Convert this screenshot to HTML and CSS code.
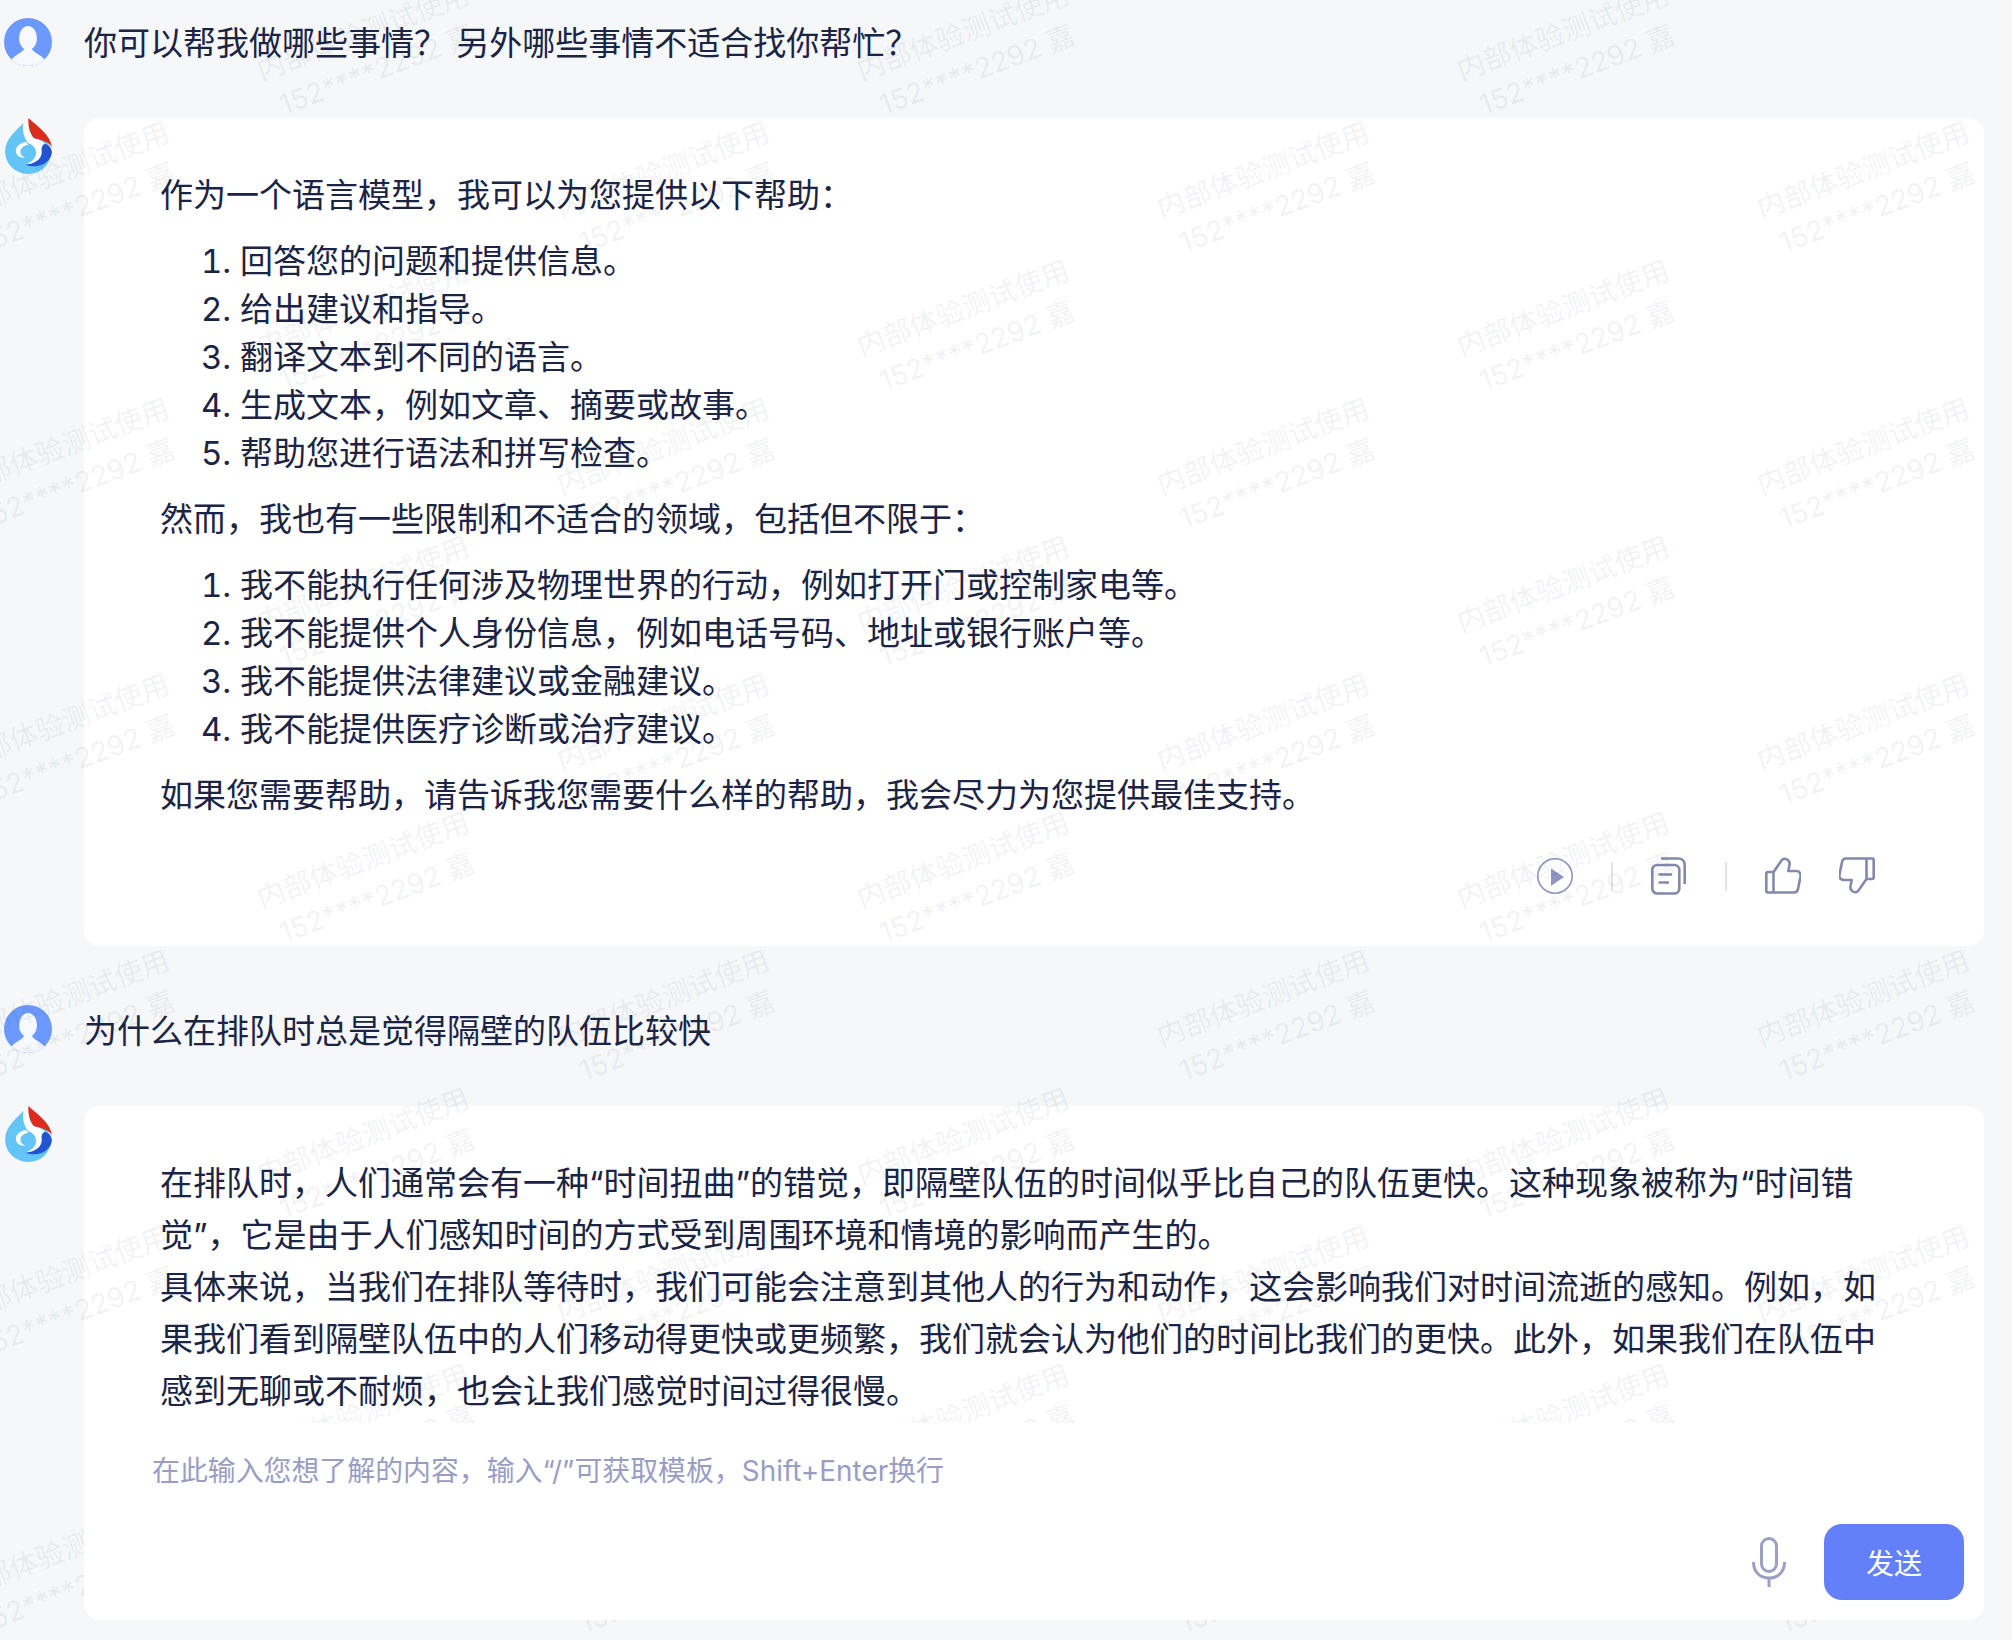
FILE: index.html
```html
<!DOCTYPE html>
<html lang="zh-CN">
<head>
    <meta charset="UTF-8">
    <meta name="viewport" content="width=device-width, initial-scale=1.0">
    <title>对话</title>
    <link rel="stylesheet" href="styles.css">
</head>
<body>
    <div id="page">
        <div id="chat">
            <div class="msg-user first">
                <svg class="avatar" viewBox="0 0 48 48">
                    <defs><clipPath id="a1"><circle cx="24" cy="24" r="24"/></clipPath></defs>
                    <circle cx="24" cy="24" r="24" fill="#6c99fd"/>
                    <g clip-path="url(#a1)" fill="#f6f9ff">
                        <ellipse cx="24" cy="20" rx="9" ry="12"/>
                        <path d="M7 42 C12 36 18 35 20 31 H28 C30 35 36 36 41 42 C36 47 30 48 24 48 C18 48 12 47 7 42Z"/>
                    </g>
                </svg>
                <div class="user-text">你可以帮我做哪些事情？ 另外哪些事情不适合找你帮忙？</div>
            </div>

            <div class="msg-bot">
                <svg class="logo" viewBox="0 0 140 168">
                    <path d="M55 15 C28 42 0 65 0 100 C0 140 32 168 70 168 C105 168 135 145 140 100 C130 60 90 55 55 15Z" fill="#62c5f6"/>
                    <path d="M55 15 L70 5 C68 25 72 45 86 60 C100 64 112 68 120 78 C112 80 108 88 110 100 C112 125 85 140 60 140 C85 132 95 115 92 100 C90 85 78 78 68 75 C58 60 50 40 55 15Z" fill="#fff"/>
                    <path d="M62 72 C42 75 28 90 33 105 C36 115 48 122 60 118 C50 115 44 106 46 98 C48 88 58 82 70 80Z" fill="#fff"/>
                    <path d="M120 78 C132 82 140 92 140 105 C135 135 100 155 60 140 C85 140 112 125 110 100 C108 88 112 80 120 78Z" fill="#2154d3"/>
                    <path d="M70 0 C100 28 136 50 140 88 C128 68 105 66 86 60 C72 42 68 20 70 0Z" fill="#dc2c1e"/>
                </svg>
                <div class="card">
                    <p>作为一个语言模型，我可以为您提供以下帮助：</p>
                    <ol>
                        <li>回答您的问题和提供信息。</li>
                        <li>给出建议和指导。</li>
                        <li>翻译文本到不同的语言。</li>
                        <li>生成文本，例如文章、摘要或故事。</li>
                        <li>帮助您进行语法和拼写检查。</li>
                    </ol>
                    <p>然而，我也有一些限制和不适合的领域，包括但不限于：</p>
                    <ol>
                        <li>我不能执行任何涉及物理世界的行动，例如打开门或控制家电等。</li>
                        <li>我不能提供个人身份信息，例如电话号码、地址或银行账户等。</li>
                        <li>我不能提供法律建议或金融建议。</li>
                        <li>我不能提供医疗诊断或治疗建议。</li>
                    </ol>
                    <p>如果您需要帮助，请告诉我您需要什么样的帮助，我会尽力为您提供最佳支持。</p>
                    <div class="actions">
                        <svg class="act" viewBox="0 0 36 40">
                            <circle cx="18" cy="20" r="17.2" fill="none" stroke="#8f94c2" stroke-width="1.6"/>
                            <path d="M14 12.5 L27 21 L14 30Z" fill="#8f94c2"/>
                        </svg>
                        <span class="sep"></span>
                        <svg class="act" viewBox="0 0 36 40" fill="none" stroke="#8489ab" stroke-width="2.6">
                            <rect x="1.3" y="9" width="27" height="28.5" rx="5"/>
                            <path d="M10 2.5 H27 C31 2.5 33.7 5 33.7 9 V28"/>
                            <path d="M7.5 18.5 H21 M7.5 26.5 H18"/>
                        </svg>
                        <span class="sep"></span>
                        <svg class="act" viewBox="0 0 36 40" fill="none" stroke="#8489ab" stroke-width="2.6" stroke-linejoin="round">
                            <path d="M8.5 16 L15.5 6 C17 3 19.5 2 22 3.5 C24.5 5 25 7 24.5 9 L23.3 15 H31 C34.5 15 36 17.5 35.5 20.5 L33 33 C32.5 35.5 31.5 36.5 29 36.5 H2.5 C1.5 36.5 1.3 36 1.3 35 V18 C1.3 16.5 2 16 3 16 H8.5 V36.5"/>
                        </svg>
                        <svg class="act" viewBox="0 0 36 40" fill="none" stroke="#8489ab" stroke-width="2.6" stroke-linejoin="round">
                            <path transform="rotate(180 18 19.5)" d="M8.5 16 L15.5 6 C17 3 19.5 2 22 3.5 C24.5 5 25 7 24.5 9 L23.3 15 H31 C34.5 15 36 17.5 35.5 20.5 L33 33 C32.5 35.5 31.5 36.5 29 36.5 H2.5 C1.5 36.5 1.3 36 1.3 35 V18 C1.3 16.5 2 16 3 16 H8.5 V36.5"/>
                        </svg>
                    </div>
                </div>
            </div>

            <div class="msg-user">
                <svg class="avatar" viewBox="0 0 48 48">
                    <defs><clipPath id="a2"><circle cx="24" cy="24" r="24"/></clipPath></defs>
                    <circle cx="24" cy="24" r="24" fill="#6c99fd"/>
                    <g clip-path="url(#a2)" fill="#f6f9ff">
                        <ellipse cx="24" cy="20" rx="9" ry="12"/>
                        <path d="M7 42 C12 36 18 35 20 31 H28 C30 35 36 36 41 42 C36 47 30 48 24 48 C18 48 12 47 7 42Z"/>
                    </g>
                </svg>
                <div class="user-text">为什么在排队时总是觉得隔壁的队伍比较快</div>
            </div>

            <div class="msg-bot">
                <svg class="logo" viewBox="0 0 140 168">
                    <path d="M55 15 C28 42 0 65 0 100 C0 140 32 168 70 168 C105 168 135 145 140 100 C130 60 90 55 55 15Z" fill="#62c5f6"/>
                    <path d="M55 15 L70 5 C68 25 72 45 86 60 C100 64 112 68 120 78 C112 80 108 88 110 100 C112 125 85 140 60 140 C85 132 95 115 92 100 C90 85 78 78 68 75 C58 60 50 40 55 15Z" fill="#fff"/>
                    <path d="M62 72 C42 75 28 90 33 105 C36 115 48 122 60 118 C50 115 44 106 46 98 C48 88 58 82 70 80Z" fill="#fff"/>
                    <path d="M120 78 C132 82 140 92 140 105 C135 135 100 155 60 140 C85 140 112 125 110 100 C108 88 112 80 120 78Z" fill="#2154d3"/>
                    <path d="M70 0 C100 28 136 50 140 88 C128 68 105 66 86 60 C72 42 68 20 70 0Z" fill="#dc2c1e"/>
                </svg>
                <div class="card card-answer">
                    <p>在排队时，人们通常会有一种“时间扭曲”的错觉，即隔壁队伍的时间似乎比自己的队伍更快。这种现象被称为“时间错觉”，它是由于人们感知时间的方式受到周围环境和情境的影响而产生的。</p>
                    <p>具体来说，当我们在排队等待时，我们可能会注意到其他人的行为和动作，这会影响我们对时间流逝的感知。例如，如果我们看到隔壁队伍中的人们移动得更快或更频繁，我们就会认为他们的时间比我们的更快。此外，如果我们在队伍中感到无聊或不耐烦，也会让我们感觉时间过得很慢。</p>
                </div>
            </div>
        </div>

        <div id="watermarks"></div>

        <div id="input-panel">
            <div class="placeholder">在此输入您想了解的内容，输入“/”可获取模板，Shift+Enter换行</div>
            <div class="input-tools">
                <svg class="mic" viewBox="0 0 34 50" fill="none" stroke="#9c9fc3" stroke-width="3">
                    <rect x="9.5" y="1.5" width="15" height="33" rx="7.5"/>
                    <path d="M1.5 25 C1.5 35 8 41 17 41 C26 41 32.5 35 32.5 25"/>
                    <path d="M17 41 V50"/>
                </svg>
                <button class="send-btn">发送</button>
            </div>
        </div>
    </div>

    <script src="script.js"></script>
</body>
</html>
```

FILE: styles.css
```css
* {
    box-sizing: border-box;
}
body {
    margin: 0;
    background-color: #f5f7f9;
    color: #1b2444;
    font-family: Inter, "Noto Sans CJK SC", sans-serif;
    font-size: 33px;
    overflow: hidden;
}
#page {
    position: relative;
    height: 1640px;
    overflow: hidden;
}
#chat {
    height: 1423px;
    overflow: hidden;
    padding-left: 4px;
    padding-right: 28px;
}
.msg-user {
    display: flex;
    align-items: center;
    height: 48px;
    margin-top: 59px;
    margin-bottom: 53px;
}
.msg-user.first {
    margin-top: 18px;
    margin-bottom: 52px;
}
.avatar {
    width: 48px;
    height: 48px;
    flex: none;
}
.user-text {
    margin-left: 32px;
    padding-top: 3px;
    line-height: 48px;
}
.first .user-text {
    padding-top: 1px;
}
.msg-bot {
    display: flex;
    align-items: flex-start;
}
.logo {
    width: 47px;
    height: 56px;
    flex: none;
    margin-left: 1px;
}
.card {
    flex: 1;
    margin-left: 32px;
    padding: 53px 104px 50px 76px;
    background-color: white;
    border-radius: 16px;
    line-height: 48px;
}
.card p {
    margin: 0;
}
.card ol {
    margin: 18px 0;
    padding-left: 80px;
}
.card-answer {
    padding-top: 51px;
    line-height: 52px;
}
.actions {
    display: flex;
    align-items: center;
    justify-content: flex-end;
    gap: 38px;
    height: 40px;
    margin-top: 37px;
    margin-right: 5px;
}
.act {
    width: 36px;
    height: 40px;
    flex: none;
}
.sep {
    width: 2px;
    height: 29px;
    background-color: #e2e3ee;
}
#watermarks {
    position: absolute;
    top: -18px;
    left: 5px;
    width: 100%;
    pointer-events: none;
}
.wm-row {
    display: flex;
    height: 138px;
}
.wm-row.odd {
    margin-left: -235px;
}
.wm-row.even {
    margin-left: 65px;
}
.wm {
    flex: none;
    width: 600px;
    height: 138px;
    display: flex;
    flex-direction: column;
    align-items: center;
    justify-content: center;
    transform: rotate(-20.5deg);
    color: rgba(30, 50, 70, 0.07);
    font-size: 28px;
    line-height: 40px;
    white-space: nowrap;
}
#input-panel {
    position: relative;
    display: flex;
    flex-direction: column;
    justify-content: space-between;
    height: 197px;
    margin-left: 84px;
    margin-right: 28px;
    padding: 28px 20px 20px 68px;
    background-color: white;
    border-radius: 0 0 16px 16px;
}
.placeholder {
    color: #9a9dc3;
    font-size: 27.9px;
    line-height: 40px;
}
.input-tools {
    display: flex;
    align-items: center;
    justify-content: flex-end;
    gap: 38px;
}
.mic {
    width: 34px;
    height: 50px;
}
.send-btn {
    width: 140px;
    height: 76px;
    border: none;
    border-radius: 18px;
    background-color: #6380f8;
    color: white;
    font-family: inherit;
    font-size: 28px;
}
```

FILE: script.js
```js
// tile the watermark over the chat, every other row shifted half a tile
const layer = document.getElementById('watermarks');

for (let i = 0; i < 12; i++) {
    const row = document.createElement('div');
    row.className = 'wm-row ' + (i % 2 === 0 ? 'even' : 'odd');
    for (let j = 0; j < 4; j++) {
        const mark = document.createElement('div');
        mark.className = 'wm';
        const line1 = document.createElement('div');
        line1.textContent = '内部体验测试使用';
        const line2 = document.createElement('div');
        line2.textContent = '152****2292 嘉';
        mark.appendChild(line1);
        mark.appendChild(line2);
        row.appendChild(mark);
    }
    layer.appendChild(row);
}
```
